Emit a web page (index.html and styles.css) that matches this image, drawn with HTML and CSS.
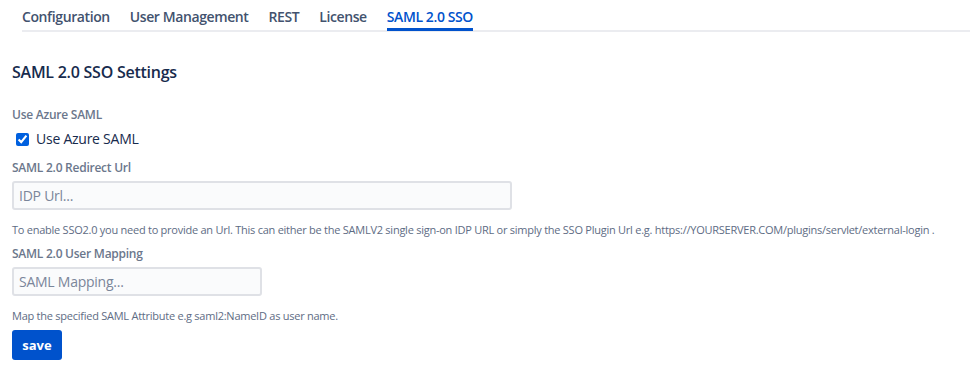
FILE: index.html
```html
<!DOCTYPE html>
<html lang="en">
<head>
    <meta charset="UTF-8">
    <title>SAML 2.0 SSO</title>
    <link rel="stylesheet" href="styles.css">
</head>
<body>

<div class="tabs">
    <a class="tab">Configuration</a>
    <a class="tab">User Management</a>
    <a class="tab">REST</a>
    <a class="tab">License</a>
    <a class="tab active">SAML 2.0 SSO</a>
</div>

<form class="settings">
    <h2>SAML 2.0 SSO Settings</h2>

    <div class="field-label">Use Azure SAML</div>
    <label class="check">
        <input type="checkbox" checked>
        <span>Use Azure SAML</span>
    </label>

    <div class="field-label">SAML 2.0 Redirect Url</div>
    <input type="text" class="text-input wide" placeholder="IDP Url...">
    <div class="help">To enable SSO2.0 you need to provide an Url. This can either be the SAMLV2 single sign-on IDP URL or simply the SSO Plugin Url e.g. https://YOURSERVER.COM/plugins/servlet/external-login .</div>

    <div class="field-label">SAML 2.0 User Mapping</div>
    <input type="text" class="text-input short" placeholder="SAML Mapping...">
    <div class="help">Map the specified SAML Attribute e.g saml2:NameID as user name.</div>

    <button type="button" class="save-button">save</button>
</form>

</body>
</html>
```

FILE: styles.css
```css
body {
    font-family: "Segoe UI", "Open Sans", sans-serif;
    margin: 0;
    padding: 0;
    background-color: #fff;
    color: #172b4d;
    letter-spacing: -0.25px;
}
.tabs {
    display: flex;
    gap: 20px;
    margin-left: 22px;
    border-bottom: 2px solid #ebecf0;
    height: 30px;
}
.tab {
    font-size: 14px;
    font-weight: 600;
    color: #42526e;
    letter-spacing: -0.4px;
    line-height: 20px;
    padding-top: 7px;
    height: 23px;
    cursor: pointer;
}
.tab.active {
    color: #0052cc;
    border-bottom: 3px solid #0052cc;
    height: 21px;
    margin-bottom: -1px;
}
.settings {
    padding: 0 12px;
}
.settings h2 {
    font-size: 16px;
    font-weight: 600;
    margin: 30px 0 0;
    line-height: 20px;
}
.field-label {
    font-size: 12px;
    font-weight: 600;
    color: #6b778c;
    margin-top: 11px;
    line-height: 16px;
}
.settings h2 + .field-label {
    margin-top: 25px;
}
.help + .field-label {
    margin-top: 9px;
}
.check {
    display: flex;
    align-items: center;
    gap: 7px;
    margin: 6px 0 0 4px;
    font-size: 14px;
    line-height: 20px;
}
.check input {
    margin: 0;
    width: 13px;
    height: 13px;
    accent-color: #0060df;
}
.text-input {
    display: block;
    box-sizing: border-box;
    height: 29px;
    margin-top: 5px;
    padding: 0 5px;
    border: 2px solid #dfe1e6;
    border-radius: 3px;
    background-color: #fafbfc;
    font-family: inherit;
    font-size: 14px;
    letter-spacing: -0.25px;
    color: #172b4d;
}
.text-input::placeholder {
    color: #7a869a;
}
.text-input.wide {
    width: 500px;
}
.text-input.short {
    width: 250px;
}
.help {
    font-size: 11px;
    color: #5e6c84;
    line-height: 14px;
    margin-top: 13px;
    white-space: nowrap;
}
.save-button {
    display: block;
    margin-top: 7px;
    width: 50px;
    height: 30px;
    border: none;
    border-radius: 3px;
    background-color: #0052cc;
    color: #fff;
    font-family: inherit;
    font-size: 13px;
    font-weight: 700;
    cursor: pointer;
}
```
